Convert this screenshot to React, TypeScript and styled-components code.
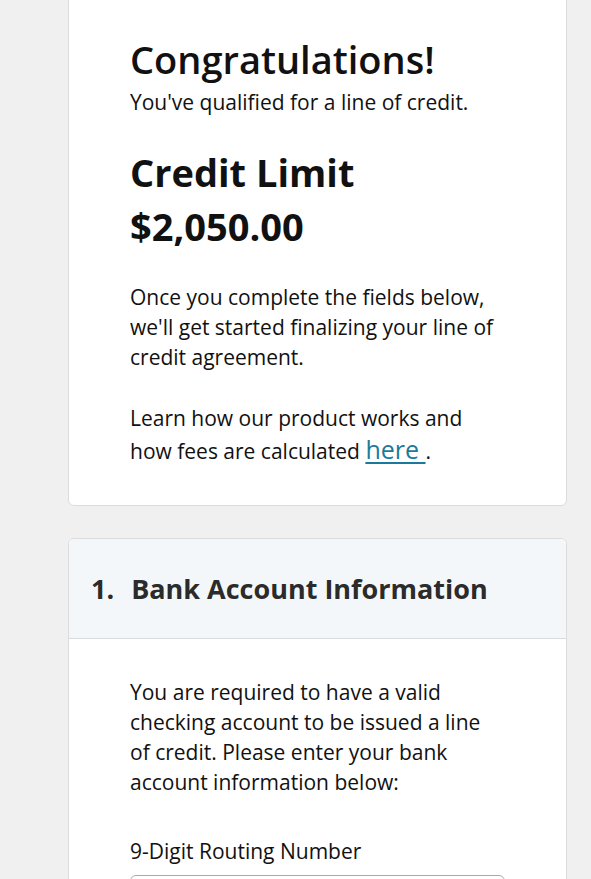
import * as React from "react";
import styled, {createGlobalStyle} from "styled-components";

const GlobalStyle = createGlobalStyle`
  html, body {
    margin: 0;
    padding: 0;
    background-color: #f0f0f0;
    font-family: "Open Sans", "Noto Sans", sans-serif;
    color: #111;
  }
`;

const Page = styled.div`
  display: flex;
  flex-direction: column;
  gap: 32px;
  padding: 0 24px 0 68px;
  width: 499px;
`;

const Card = styled.section<{ $cut?: boolean }>`
  background-color: #fff;
  border: 1px solid #dcdcdc;
  border-radius: 6px;
  margin-top: ${p => p.$cut ? "-10px" : "0"};
  overflow: hidden;
`;

const Intro = styled.div`
  padding: 44px 61px 39px 61px;
`;

const Title = styled.h1`
  margin: 0;
  font-size: 38px;
  font-weight: 600;
  line-height: 48px;
`;

const Subtitle = styled.p`
  margin: 4px 0 0;
  font-size: 21px;
  line-height: 30px;
`;

const Limit = styled.h2`
  margin: 28px 0 0;
  font-size: 38px;
  font-weight: 700;
  line-height: 54px;
`;

const Text = styled.p<{ $gap?: number }>`
  margin: ${p => p.$gap ?? 0}px 0 0;
  font-size: 21px;
  line-height: 30px;
`;

const Link = styled.a`
  color: #1b7a9c;
  font-size: 25px;
  line-height: 33px;
  text-decoration: underline;
  text-underline-offset: 3px;
`;

const SectionHeader = styled.div`
  display: flex;
  gap: 17px;
  align-items: center;
  height: 99px;
  padding: 0 22px;
  background-color: #f4f7fa;
  border-bottom: 1px solid #d8dcdf;
`;

const SectionTitle = styled.h3`
  margin: 0;
  font-size: 27px;
  font-weight: 700;
  color: #2b2b2b;
`;

const SectionBody = styled.div`
  padding: 38px 61px 0 61px;
`;

const Label = styled.label`
  display: block;
  margin-top: 39px;
  font-size: 21px;
  line-height: 30px;
`;

const Input = styled.input`
  display: block;
  box-sizing: border-box;
  width: 100%;
  height: 44px;
  margin-top: 9px;
  border: 1px solid #aaa;
  border-radius: 6px;
`;

export default function App() {
  return (
    <>
      <GlobalStyle />
      <Page>
        <Card $cut>
          <Intro>
            <Title>Congratulations!</Title>
            <Subtitle>You've qualified for a line of credit.</Subtitle>
            <Limit>Credit Limit<br />$2,050.00</Limit>
            <Text $gap={29}>
              Once you complete the fields below, we'll get started finalizing your line of credit agreement.
            </Text>
            <Text $gap={31}>
              Learn how our product works and how fees are calculated <Link href="#">here </Link>.
            </Text>
          </Intro>
        </Card>
        <Card>
          <SectionHeader>
            <SectionTitle>1.</SectionTitle>
            <SectionTitle>Bank Account Information</SectionTitle>
          </SectionHeader>
          <SectionBody>
            <Text>
              You are required to have a valid checking account to be issued a line of credit. Please enter your bank account information below:
            </Text>
            <Label>9-Digit Routing Number</Label>
            <Input />
          </SectionBody>
        </Card>
      </Page>
    </>
  );
}
